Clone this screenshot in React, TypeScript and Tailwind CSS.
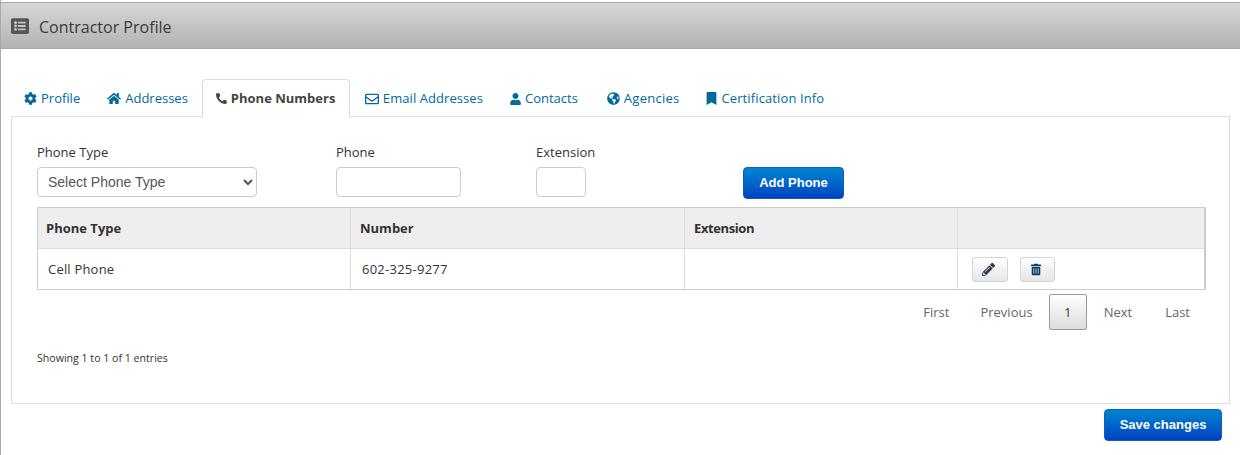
import React from "react";
import { FaCog, FaHome, FaPhone, FaRegEnvelope, FaUser, FaGlobeAmericas, FaBookmark, FaPencilAlt, FaTrashAlt, FaListAlt } from "react-icons/fa";

const tabs = [
  { label: "Profile", icon: <FaCog className="w-[13px] h-[13px]" />, cls: "", text: "" },
  { label: "Addresses", icon: <FaHome className="w-[14px] h-[13px]" />, cls: "", text: "" },
  { label: "Phone Numbers", icon: <FaPhone className="w-[11px] h-[11px] -scale-x-100" />, active: true, cls: "w-[148px]", text: "" },
  { label: "Email Addresses", icon: <FaRegEnvelope className="w-[14px] h-[14px]" />, cls: "ml-px", text: "tracking-[0.07px]" },
  { label: "Contacts", icon: <FaUser className="w-[11px] h-[12px]" />, cls: "", text: "" },
  { label: "Agencies", icon: <FaGlobeAmericas className="w-[13px] h-[13px]" />, cls: "ml-[2px]", text: "tracking-[0.25px]" },
  { label: "Certification Info", icon: <FaBookmark className="w-[11px] h-[13px]" />, cls: "", text: "tracking-[0.12px]" },
];

const blueBtn = "rounded-[4px] border border-[#0a5fb8] bg-gradient-to-b from-[#0085cf] to-[#0040c0] text-white font-bold text-[13px] font-['Liberation_Sans',sans-serif]";
const input = "h-[30px] rounded-[4px] border border-[#ccc] bg-white block";
const iconBtn = "h-[25px] rounded-[3px] border border-[#d4d4d4] bg-gradient-to-b from-white to-[#e6e6e6] flex items-center justify-center text-[#2b3a4a]";
const pageLink = "text-[13px] text-[#666] pt-px";

export default function App() {
  return (
    <div className="w-[1240px] h-[455px] overflow-hidden bg-white border-l border-[#aaa] pt-[2px] font-['Open_Sans',sans-serif] text-[13px] text-[#333]">
      <div className="h-[47px] border-y border-[#a8a8a8] bg-gradient-to-b from-[#d6d6d6] to-[#b3b3b3] flex items-center pl-[10px]">
        <FaListAlt className="w-[18px] h-[18px] text-[#555]" />
        <span className="ml-[10px] pt-[2px] text-[16px] text-[#3a3a3a]">Contractor Profile</span>
      </div>

      <div className="pt-[30px] pl-[10px] pr-[10px]">
        <div className="flex gap-px relative z-10 h-[38px]">
          {tabs.map((t) =>
            t.active ? (
              <div key={t.label} className={"h-[38px] pl-[13px] flex items-center gap-[4px] bg-white border border-b-0 border-[#ddd] rounded-t-[4px] font-bold text-[#444] " + t.cls}>
                {t.icon}
                <span>{t.label}</span>
              </div>
            ) : (
              <div key={t.label} className={"h-[38px] px-[13px] pt-[1px] flex items-center gap-[4px] text-[#00699e] " + t.cls}>
                {t.icon}
                <span className={t.text}>{t.label}</span>
              </div>
            )
          )}
        </div>

        <div className="h-[288px] -mt-px border border-[#ddd] px-[25px]">
          <div className="flex items-start pt-[26px]">
            <div className="w-[299px]">
              <div className="h-[24px] leading-[18px]">Phone Type</div>
              <select className="h-[30px] w-[220px] rounded-[4px] border border-[#ccc] bg-white pl-[6px] text-[14px] text-[#555] font-['Liberation_Sans',sans-serif]" defaultValue="">
                <option value="">Select Phone Type</option>
              </select>
            </div>
            <div className="w-[200px]">
              <div className="h-[24px] leading-[18px]">Phone</div>
              <input className={input + " w-[125px]"} />
            </div>
            <div className="w-[207px]">
              <div className="h-[24px] leading-[18px]">Extension</div>
              <input className={input + " w-[50px]"} />
            </div>
            <button className={blueBtn + " w-[101px] h-[32px] mt-[24px]"}>Add Phone</button>
          </div>

          <div className="mt-[8px] w-[1169px] border border-[#ccc] border-r-2">
            <div className="flex h-[41px] bg-[#eee] font-bold border-b border-[#ddd]">
              <div className="w-[313px] pl-[8px] pt-px flex items-center border-r border-[#ddd]">Phone Type</div>
              <div className="w-[334px] pl-[9px] pt-px flex items-center border-r border-[#ddd]">Number</div>
              <div className="w-[273px] pl-[9px] pt-px flex items-center border-r border-[#ddd] tracking-[-0.4px]">Extension</div>
              <div className="flex-1" />
            </div>
            <div className="flex h-[40px]">
              <div className="w-[313px] pl-[10px] pt-px flex items-center border-r border-[#ddd] tracking-[0.2px]">Cell Phone</div>
              <div className="w-[334px] pl-[11px] pt-px flex items-center border-r border-[#ddd] tracking-[0.25px]">602-325-9277</div>
              <div className="w-[273px] border-r border-[#ddd]" />
              <div className="flex-1 flex items-center pl-[14px] gap-[12px]">
                <button className={iconBtn + " w-[36px]"}><FaPencilAlt className="w-[13px] h-[13px] mr-[3px]" /></button>
                <button className={iconBtn + " w-[35px]"}><FaTrashAlt className="w-[10px] h-[13px] mr-[3px] text-[#0b3a66]" /></button>
              </div>
            </div>
          </div>

          <div className="mt-[4px] w-[1169px] flex items-center justify-end pr-[16px] h-[36px]">
            <span className={pageLink}>First</span>
            <span className={pageLink + " ml-[31px]"}>Previous</span>
            <span className="ml-[16px] w-[38px] h-[36px] pt-px flex items-center justify-center rounded-[2px] border border-[#999] bg-gradient-to-b from-white to-[#dcdcdc] text-[#333]">1</span>
            <span className={pageLink + " ml-[17px]"}>Next</span>
            <span className={pageLink + " ml-[33px]"}>Last</span>
          </div>

          <div className="mt-[21px] text-[10.6px] leading-[14px] text-[#333]">Showing 1 to 1 of 1 entries</div>
        </div>

        <div className="flex justify-end pr-[8px] pt-[5px]">
          <button className={blueBtn + " w-[118px] h-[32px]"}>Save changes</button>
        </div>
      </div>
    </div>
  );
}
